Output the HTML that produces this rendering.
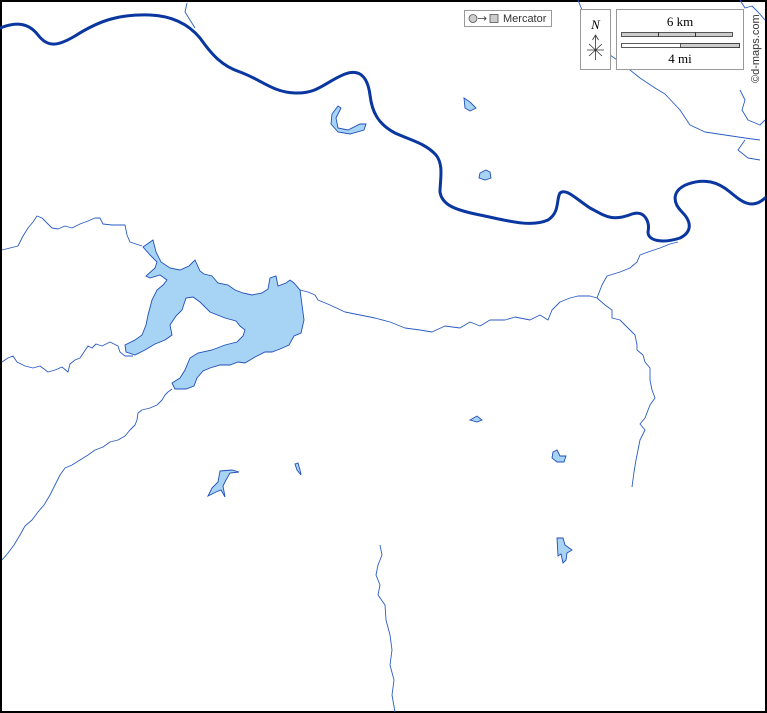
<!DOCTYPE html>
<html><head><meta charset="utf-8"><style>
html,body{margin:0;padding:0;background:#fff;}
svg{display:block;}
</style></head><body>
<svg width="767" height="713" viewBox="0 0 767 713" xmlns="http://www.w3.org/2000/svg">
<rect x="1" y="1" width="765" height="711" fill="#fff" stroke="#000" stroke-width="2"/>
<g fill="none" stroke="#2a5cc4" stroke-width="0.9" stroke-linejoin="round">
<path d="M187 3 L185 12 L190 20 L195 28"/>
<path d="M578 0 L582 10 L590 20 L588 32 L592 42 L600 48 L610 55 L620 62 L640 78 L655 88 L665 94 L680 110 L690 125 L705 132 L725 135 L745 138 L760 140"/>
<path d="M740 90 L745 100 L742 110 L748 120 L760 125 L765 120"/>
<path d="M745 140 L738 150 L748 158 L760 160"/>
<path d="M740 0 L745 8 L752 6 L758 12 L765 20"/>
<path d="M2 250 L10 248 L18 246 L23 236 L28 228 L33 222 L37 216 L42 218 L48 224 L52 228 L58 229 L65 226 L72 228 L80 224 L88 221 L95 218 L100 218 L103 224 L112 225 L125 225 L127 235 L130 242 L142 246"/>
<path d="M2 362 L8 358 L13 356 L17 362 L25 366 L33 368 L40 366 L48 372 L55 370 L62 367 L68 372 L70 364 L75 360 L80 358 L84 352 L88 346 L92 348 L96 344 L102 346 L110 342 L118 346 L120 352 L125 356 L133 356"/>
<path d="M2 560 L8 553 L14 545 L20 535 L25 526 L32 520 L38 512 L44 505 L50 495 L55 485 L60 475 L65 468 L72 465 L80 460 L88 455 L95 450 L103 447 L110 442 L118 440 L125 436 L130 430 L135 425 L137 420 L138 413 L142 410 L150 408 L157 405 L162 400 L165 395 L168 392 L172 389"/>
<path d="M300 290 L308 292 L315 295 L318 300"/>
<path d="M318 300 L330 305 L345 312 L360 315 L375 318 L390 322 L405 328 L420 330 L432 332 L445 326 L460 328 L470 322 L480 326 L490 320 L505 320 L515 317 L530 320 L540 315 L548 320 L552 310 L560 302 L570 298 L578 296 L590 296 L597 298"/>
<path d="M597 298 L602 285 L607 276 L620 272 L630 268 L637 262 L640 255 L648 252 L660 248 L670 244 L678 242"/>
<path d="M597 298 L605 305 L612 310 L612 318 L620 320 L625 325 L630 330 L635 335 L637 345 L637 350 L643 355 L645 362 L650 368 L650 380 L652 390 L655 398 L650 405 L645 418 L640 424 L645 430 L640 440 L638 450 L636 460 L634 472 L632 487"/>
<path d="M380 545 L382 555 L378 565 L376 575 L380 585 L378 595 L385 605 L386 620 L390 635 L392 650 L390 665 L394 680 L392 695 L395 712"/>
</g>
<path d="M0 28 C15 22 28 22 38 35 C48 48 58 46 75 36 C100 20 120 14 150 15 C175 16 190 26 200 38 C212 55 222 66 240 72 C262 80 272 92 295 93 C318 94 325 82 345 74 C362 68 368 80 370 95 C372 112 378 124 395 133 C410 140 425 143 436 155 C444 165 440 180 440 192 C442 205 455 210 480 215 C505 220 530 228 548 220 C560 212 556 200 560 193 C566 188 575 198 590 208 C605 216 612 222 632 214 C645 210 650 222 648 232 C648 242 665 243 680 238 C692 232 692 222 682 212 C672 202 672 190 688 184 C705 178 718 182 730 192 C742 202 752 210 765 198" fill="none" stroke="#0a36a0" stroke-width="3" stroke-linecap="round"/>
<path fill="#a7d3f5" stroke="#1f4fb8" stroke-width="0.9" d="M143 247 L153 240 L156 252 L161 262 L170 268 L180 270 L189 266 L195 260 L200 271 L204 274 L212 276 L218 283 L228 285 L235 290 L243 293 L252 295 L262 293 L268 289 L270 278 L276 276 L278 286 L286 283 L290 280 L294 283 L300 290 L304 320 L301 333 L294 336 L289 345 L280 349 L272 352 L265 352 L255 357 L245 363 L238 362 L230 365 L220 365 L210 368 L203 371 L197 378 L194 386 L186 389 L175 389 L172 383 L180 378 L185 370 L190 358 L198 353 L212 350 L225 345 L237 342 L243 336 L245 330 L240 326 L236 321 L225 318 L210 312 L200 302 L193 297 L186 298 L182 310 L176 316 L170 325 L172 335 L165 340 L155 344 L145 350 L135 355 L126 352 L125 345 L135 340 L142 335 L146 325 L148 315 L152 300 L157 290 L163 285 L167 280 L160 275 L150 278 L146 276 L155 268 L157 262 L150 255 Z"/>
<path fill="#a7d3f5" stroke="#1f4fb8" stroke-width="0.9" d="M338 106 L341 108 L336 118 L338 128 L348 130 L360 124 L366 124 L364 130 L350 134 L338 132 L331 124 L332 114 Z"/>
<path fill="#a7d3f5" stroke="#1f4fb8" stroke-width="0.9" d="M464 98 L470 102 L476 108 L470 111 L465 108 Z"/>
<path fill="#a7d3f5" stroke="#1f4fb8" stroke-width="0.9" d="M480 173 L486 170 L490 172 L491 178 L485 180 L479 178 Z"/>
<path fill="#a7d3f5" stroke="#1f4fb8" stroke-width="0.9" d="M220 471 L232 470 L239 472 L230 473 L226 480 L223 486 L225 497 L221 490 L216 492 L208 496 L212 488 L218 482 Z"/>
<path fill="#a7d3f5" stroke="#1f4fb8" stroke-width="0.9" d="M295 464 L298 463 L300 470 L301 475 L297 470 Z"/>
<path fill="#a7d3f5" stroke="#1f4fb8" stroke-width="0.9" d="M470 420 L477 416 L482 420 L477 422 Z"/>
<path fill="#a7d3f5" stroke="#1f4fb8" stroke-width="0.9" d="M553 452 L557 450 L560 456 L566 456 L564 462 L557 462 L552 458 Z"/>
<path fill="#a7d3f5" stroke="#1f4fb8" stroke-width="0.9" d="M557 538 L563 538 L565 545 L572 550 L567 553 L566 560 L563 563 L561 554 L558 556 Z"/>
<rect x="464.5" y="10.5" width="87" height="16" fill="#fff" stroke="#999"/>
<circle cx="473" cy="18.5" r="4" fill="#ccc" stroke="#555" stroke-width="0.8"/>
<path d="M478 18.5 L486 18.5 M484 16.5 L486 18.5 L484 20.5" stroke="#333" stroke-width="0.8" fill="none"/>
<rect x="490" y="14.5" width="8" height="8" fill="#ccc" stroke="#555" stroke-width="0.8"/>
<text x="503" y="22" font-family="Liberation Sans, sans-serif" font-size="11" fill="#333">Mercator</text>
<rect x="580.5" y="9.5" width="30" height="60" fill="#fff" stroke="#999"/>
<text x="595.5" y="29" text-anchor="middle" font-family="Liberation Serif, serif" font-style="italic" font-size="13">N</text>
<path d="M595.5 60 L595.5 35 M592.5 40 L595.5 35 L598.5 40 M587 50 L604 50 M589 44 L602 56 M589 56 L602 44" stroke="#333" stroke-width="0.8" fill="none"/>
<rect x="616.5" y="9.5" width="127" height="60" fill="#fff" stroke="#999"/>
<text x="680" y="26" text-anchor="middle" font-family="Liberation Serif, serif" font-size="13">6 km</text>
<rect x="621.5" y="32.5" width="111" height="4" fill="#ccc" stroke="#333" stroke-width="0.8"/>
<path d="M658.5 32 L658.5 37 M695.5 32 L695.5 37" stroke="#333"/>
<rect x="621.5" y="43.5" width="118" height="4" fill="#fff" stroke="#333" stroke-width="0.8"/>
<rect x="680.5" y="43.5" width="59" height="4" fill="#ccc" stroke="#333" stroke-width="0.8"/>
<text x="680" y="63" text-anchor="middle" font-family="Liberation Serif, serif" font-size="13">4 mi</text>
<text transform="translate(759,83) rotate(-90)" font-family="Liberation Sans, sans-serif" font-size="11" fill="#333">©d-maps.com</text>
</svg>
</body></html>
